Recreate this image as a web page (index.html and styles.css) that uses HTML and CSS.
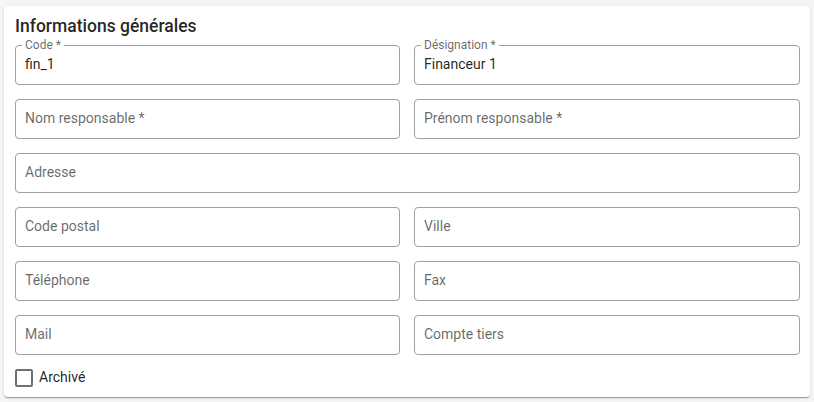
FILE: index.html
```html
<!DOCTYPE html>
<html lang="fr">
<head>
<meta charset="utf-8">
<title>Informations générales</title>
<link rel="stylesheet" href="styles.css">
</head>
<body>
<section class="card">
  <h2 class="title">Informations générales</h2>
  <div class="grid">
    <div class="field filled"><span class="legend">Code *</span><span class="value">fin_1</span></div>
    <div class="field filled"><span class="legend">Désignation *</span><span class="value">Financeur 1</span></div>
    <div class="field"><span class="placeholder">Nom responsable *</span></div>
    <div class="field"><span class="placeholder">Prénom responsable *</span></div>
    <div class="field wide"><span class="placeholder">Adresse</span></div>
    <div class="field"><span class="placeholder">Code postal</span></div>
    <div class="field"><span class="placeholder">Ville</span></div>
    <div class="field"><span class="placeholder">Téléphone</span></div>
    <div class="field"><span class="placeholder">Fax</span></div>
    <div class="field"><span class="placeholder">Mail</span></div>
    <div class="field"><span class="placeholder">Compte tiers</span></div>
  </div>
  <label class="check"><span class="box"></span><span class="check-label">Archivé</span></label>
</section>
</body>
</html>
```
FILE: styles.css
```css
html, body {
  margin: 0;
  padding: 0;
  background: #f5f5f5;
  font-family: Roboto, "Liberation Sans", sans-serif;
}
body {
  padding: 6px 4px 5px 4px;
}
.card {
  width: 806px;
  box-sizing: border-box;
  background: #fff;
  border-radius: 4px;
  box-shadow: 0 2px 1px -1px rgba(0,0,0,0.2), 0 1px 1px 0 rgba(0,0,0,0.14), 0 1px 3px 0 rgba(0,0,0,0.12);
  padding: 8px 10px 10px 11px;
}
.title {
  margin: 0 0 7px 0;
  font-size: 17.5px;
  line-height: 24px;
  font-weight: 500;
  color: rgba(0,0,0,0.87);
}
.grid {
  display: grid;
  grid-template-columns: 385px 386px;
  grid-auto-rows: 40px;
  column-gap: 14px;
  row-gap: 14px;
}
.field {
  position: relative;
  box-sizing: border-box;
  border: 1px solid #a0a0a0;
  border-radius: 4px;
  display: flex;
  align-items: center;
  padding: 0 10px 0 9px;
  font-size: 14px;
  line-height: 18px;
}
.field.wide {
  grid-column: 1 / 3;
}
.placeholder {
  color: rgba(0,0,0,0.6);
  padding-bottom: 2px;
}
.value {
  color: rgba(0,0,0,0.87);
  padding-bottom: 3px;
}
.legend {
  position: absolute;
  left: 6px;
  top: -8px;
  padding: 0 3px;
  background: #fff;
  font-size: 12px;
  line-height: 14px;
  color: rgba(0,0,0,0.6);
}
.check {
  display: flex;
  align-items: center;
  margin-top: 14px;
  height: 18px;
}
.box {
  width: 18px;
  height: 18px;
  box-sizing: border-box;
  border: 2px solid #707070;
  border-radius: 2px;
}
.check-label {
  margin-left: 6px;
  font-size: 14px;
  color: rgba(0,0,0,0.87);
  padding-bottom: 2px;
}
```
